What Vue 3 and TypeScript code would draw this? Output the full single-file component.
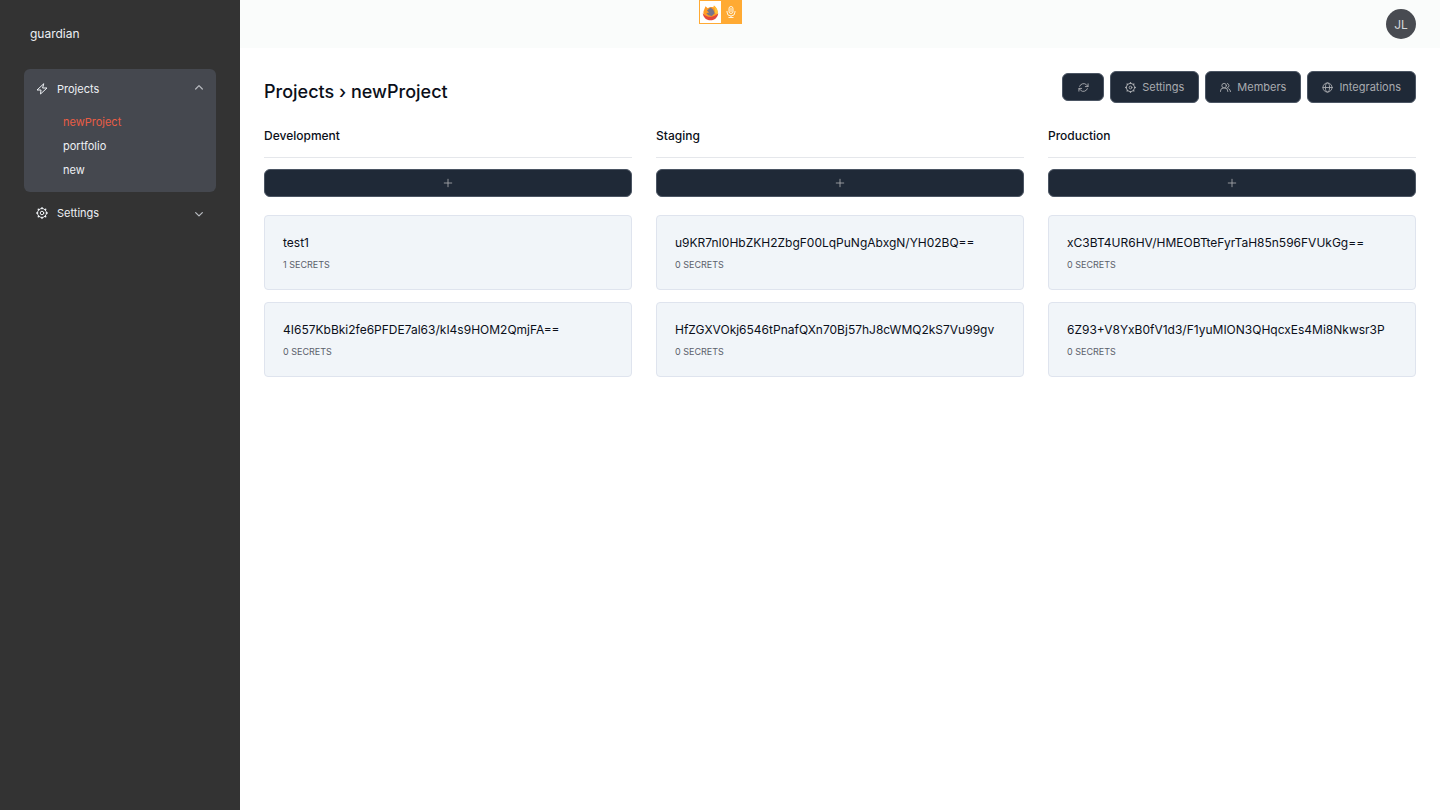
<script setup lang="ts">
import { ref } from 'vue'

interface Secret {
  name: string
  count: number
}
interface Environment {
  title: string
  items: Secret[]
}

const projects: string[] = ['newProject', 'portfolio', 'new']
const active = ref('newProject')
const open = ref(true)

const environments: Environment[] = [
  {
    title: 'Development',
    items: [
      { name: 'test1', count: 1 },
      { name: '4I657KbBki2fe6PFDE7al63/kI4s9HOM2QmjFA==', count: 0 },
    ],
  },
  {
    title: 'Staging',
    items: [
      { name: 'u9KR7nI0HbZKH2ZbgF00LqPuNgAbxgN/YH02BQ==', count: 0 },
      { name: 'HfZGXVOkj6546tPnafQXn70Bj57hJ8cWMQ2kS7Vu99gv', count: 0 },
    ],
  },
  {
    title: 'Production',
    items: [
      { name: 'xC3BT4UR6HV/HMEOBTteFyrTaH85n596FVUkGg==', count: 0 },
      { name: '6Z93+V8YxB0fV1d3/F1yuMION3QHqcxEs4Mi8Nkwsr3P', count: 0 },
    ],
  },
]

const gearTeeth =
  'M12 3V1.500M12 21v1.500M3 12H1.500M21 12h1.500M5.600 5.600l-1-1M18.400 18.400l1 1M5.600 18.400l-1 1M18.400 5.600l1-1'
</script>

<template>
  <div class="app">
    <aside class="sidebar">
      <a class="brand" href="#">guardian</a>
      <nav class="nav" aria-label="Main">
        <div class="group group-open">
          <button class="nav-button" type="button" :aria-expanded="open" @click="open = !open">
            <svg class="icon nav-icon" viewBox="0 0 24 24"><path d="M15 2 2 14h8l-1 8L22 10h-8z" /></svg>
            <span class="nav-label">Projects</span>
            <svg class="icon chevron" viewBox="0 0 24 24"><path d="m4 12 8-8 8 8" /></svg>
          </button>
          <ul v-if="open" class="links">
            <li v-for="p in projects" :key="p">
              <a href="#" class="link" :class="{ active: p === active }" @click.prevent="active = p">{{ p }}</a>
            </li>
          </ul>
        </div>
        <div class="group">
          <button class="nav-button" type="button" aria-expanded="false">
            <svg class="icon nav-icon" viewBox="0 0 24 24">
              <circle cx="12" cy="12" r="9" />
              <path class="teeth" :d="gearTeeth" />
              <circle cx="12" cy="12" r="3.500" />
            </svg>
            <span class="nav-label">Settings</span>
            <svg class="icon chevron" viewBox="0 0 24 24"><path d="m4 11 8 8 8-8" /></svg>
          </button>
        </div>
      </nav>
    </aside>

    <div class="content">
      <header class="topbar">
        <button class="avatar" type="button" aria-label="Account">JL</button>
      </header>

      <main class="main">
        <div class="heading">
          <h1 class="title">Projects › newProject</h1>
          <div class="actions">
            <button class="button small refresh" type="button" aria-label="Refresh">
              <svg class="icon" viewBox="0 0 24 24"><path d="M22 4v6h-6M2 20v-6h6M3.500 9.500a9 9 0 0 1 15-3.400L22 10M2 14l3.500 3.900a9 9 0 0 0 15-3.400" /></svg>
            </button>
            <button class="button" type="button">
              <svg class="icon" viewBox="0 0 24 24">
                <circle cx="12" cy="12" r="9" />
                <path class="teeth" :d="gearTeeth" />
                <circle cx="12" cy="12" r="3" />
              </svg>
              Settings
            </button>
            <button class="button" type="button">
              <svg class="icon" viewBox="0 0 24 24"><circle cx="9" cy="8" r="5" /><path d="M1 21v-1a7 7 0 0 1 7-7h2a7 7 0 0 1 7 7v1M16 3.200a5 5 0 0 1 0 9.600M19 14.500a7 7 0 0 1 4 6.500" /></svg>
              Members
            </button>
            <button class="button" type="button">
              <svg class="icon" viewBox="0 0 24 24"><circle cx="12" cy="12" r="10" /><path d="M2 12h20" /><ellipse cx="12" cy="12" rx="4.500" ry="10" /></svg>
              Integrations
            </button>
          </div>
        </div>

        <div class="columns">
          <section v-for="env in environments" :key="env.title" class="column">
            <h2 class="column-title">{{ env.title }}</h2>
            <button class="button small add" type="button" :aria-label="'Add to ' + env.title">
              <svg class="icon plus" viewBox="0 0 24 24"><path d="M12 3v18M3 12h18" /></svg>
            </button>
            <div class="cards">
              <article v-for="item in env.items" :key="item.name" class="card">
                <h3 class="card-title">{{ item.name }}</h3>
                <p class="card-count">{{ item.count }} SECRETS</p>
              </article>
            </div>
          </section>
        </div>
      </main>
    </div>

    <div class="sharing" role="status" aria-label="Microphone in use">
      <span class="browser">
        <svg viewBox="0 0 24 24" aria-hidden="true">
          <path fill="#ff9a24" d="M3 8 5 3l3 3c3-2 6-2 8-1l1-3c4 3 6 8 5 13-2 5-6 7-10 7S2 19 2 13c0-2 0-3 1-5z" />
          <path fill="#e2483d" d="M1 13c3 4 7 5 11 5s8-2 11-5c-1 6-5 10-11 10S2 19 1 13z" />
          <path fill="#ffc433" d="M16 2c5 3 7 7 6 12l-4-1c1-4 0-7-2-11z" />
          <path fill="#77758a" d="m7 9 5-4 4 3 2 5-4 4-5-1-3-3 4-1z" />
        </svg>
      </span>
      <span class="mic">
        <svg viewBox="0 0 24 24" aria-hidden="true">
          <rect x="8" y="1" width="8" height="14" rx="4" />
          <path d="M4 10v2a8 8 0 0 0 16 0v-2M12 20v3M7 23h10M9 6h6M9 10h6" />
        </svg>
      </span>
    </div>
  </div>
</template>

<style>
body {
  margin: 0;
}
</style>

<style scoped>
.app {
  display: flex;
  min-height: 100vh;
  background: #fff;
  color: #0b0f19;
  font-family: Inter, "Noto Sans", sans-serif;
  font-size: 12px;
}
.app * {
  box-sizing: border-box;
}
button {
  font: inherit;
  cursor: pointer;
}
h1,
h2,
h3,
p,
ul {
  margin: 0;
  padding: 0;
}
ul {
  list-style: none;
}
a {
  color: inherit;
  text-decoration: none;
}
.icon {
  width: 11px;
  height: 11px;
  flex: none;
  fill: none;
  stroke: currentColor;
  stroke-width: 2;
  stroke-linecap: round;
  stroke-linejoin: round;
}
.teeth {
  stroke-width: 3;
}
.sidebar {
  width: 240px;
  flex: none;
  padding: 24px;
  background: #333;
  color: #edf0f4;
}
.brand {
  display: block;
  padding: 0 6px;
  font-size: 12px;
  line-height: 20px;
}
.nav {
  margin-top: 25px;
}
.group {
  padding: 8px 12px;
}
.group + .group {
  padding-top: 9px;
}
.nav-icon {
  width: 12px;
  height: 12px;
}
.nav-button {
  display: flex;
  align-items: center;
  width: 100%;
  height: 24px;
  padding: 0;
  border: 0;
  background: none;
  color: inherit;
  font-size: 11px;
  text-align: left;
}
.group-open {
  border-radius: 6px;
  background: #45484f;
}
.nav-label {
  flex: 1;
  margin-left: 9px;
}
.chevron {
  width: 10px;
  height: 10px;
  color: #b8bbc0;
  stroke-width: 3;
}
.links {
  padding: 9px 27px 2px;
}
.link {
  display: block;
  font-size: 11px;
  line-height: 24px;
}
.link.active {
  color: #e85d45;
}
.content {
  flex: 1;
  min-width: 0;
}
.topbar {
  display: flex;
  align-items: center;
  justify-content: flex-end;
  height: 48px;
  padding: 0 24px;
  background: #fafcfb;
}
.avatar {
  width: 30px;
  height: 30px;
  padding: 0;
  border: 0;
  border-radius: 50%;
  background: #484b51;
  color: #d5d7dc;
}
.main {
  padding: 23px 24px;
}
.heading {
  display: flex;
  align-items: center;
  justify-content: space-between;
  height: 32px;
}
.title {
  padding-top: 9px;
  font-size: 18px;
  font-weight: 500;
  line-height: 24px;
}
.actions {
  display: flex;
  align-items: center;
  gap: 6px;
}
.button {
  display: flex;
  align-items: center;
  justify-content: center;
  gap: 6px;
  height: 32px;
  padding: 0 14px;
  border: 1px solid #4b5563;
  border-radius: 6px;
  background: #1f2937;
  color: #a9abaf;
  font-size: 11px;
}
.small {
  height: 28px;
}
.refresh {
  width: 42px;
}
.columns {
  display: grid;
  grid-template-columns: repeat(3, minmax(0, 1fr));
  gap: 24px;
  margin-top: 23px;
}
.column-title {
  padding-bottom: 11px;
  border-bottom: 1px solid #e5e7eb;
  font-size: 12px;
  font-weight: 500;
  line-height: 20px;
}
.add {
  width: 100%;
  margin-top: 11px;
}
.plus {
  width: 10px;
  height: 10px;
}
.cards {
  display: grid;
  gap: 12px;
  margin-top: 18px;
}
.card {
  padding: 18px 18px 16px;
  border: 1px solid #dfe4ee;
  border-radius: 4px;
  background: #f1f5f9;
}
.card-title {
  font-size: 12px;
  font-weight: 400;
  line-height: 18px;
}
.card-count {
  margin-top: 5px;
  color: #5b616b;
  font-size: 9px;
  line-height: 16px;
}
.sharing {
  position: absolute;
  top: 0;
  left: 50%;
  display: flex;
  width: 43px;
  height: 24px;
  margin-left: -21px;
  border: 1px solid #ffaa33;
  background: #ffaa33;
}
.browser,
.mic {
  display: flex;
  flex: 1;
  align-items: center;
  justify-content: center;
}
.browser {
  background: #fff;
}
.browser svg {
  width: 17px;
  height: 17px;
}
.mic svg {
  width: 12px;
  height: 12px;
  fill: none;
  stroke: #fff3dc;
  stroke-width: 2;
}
</style>
